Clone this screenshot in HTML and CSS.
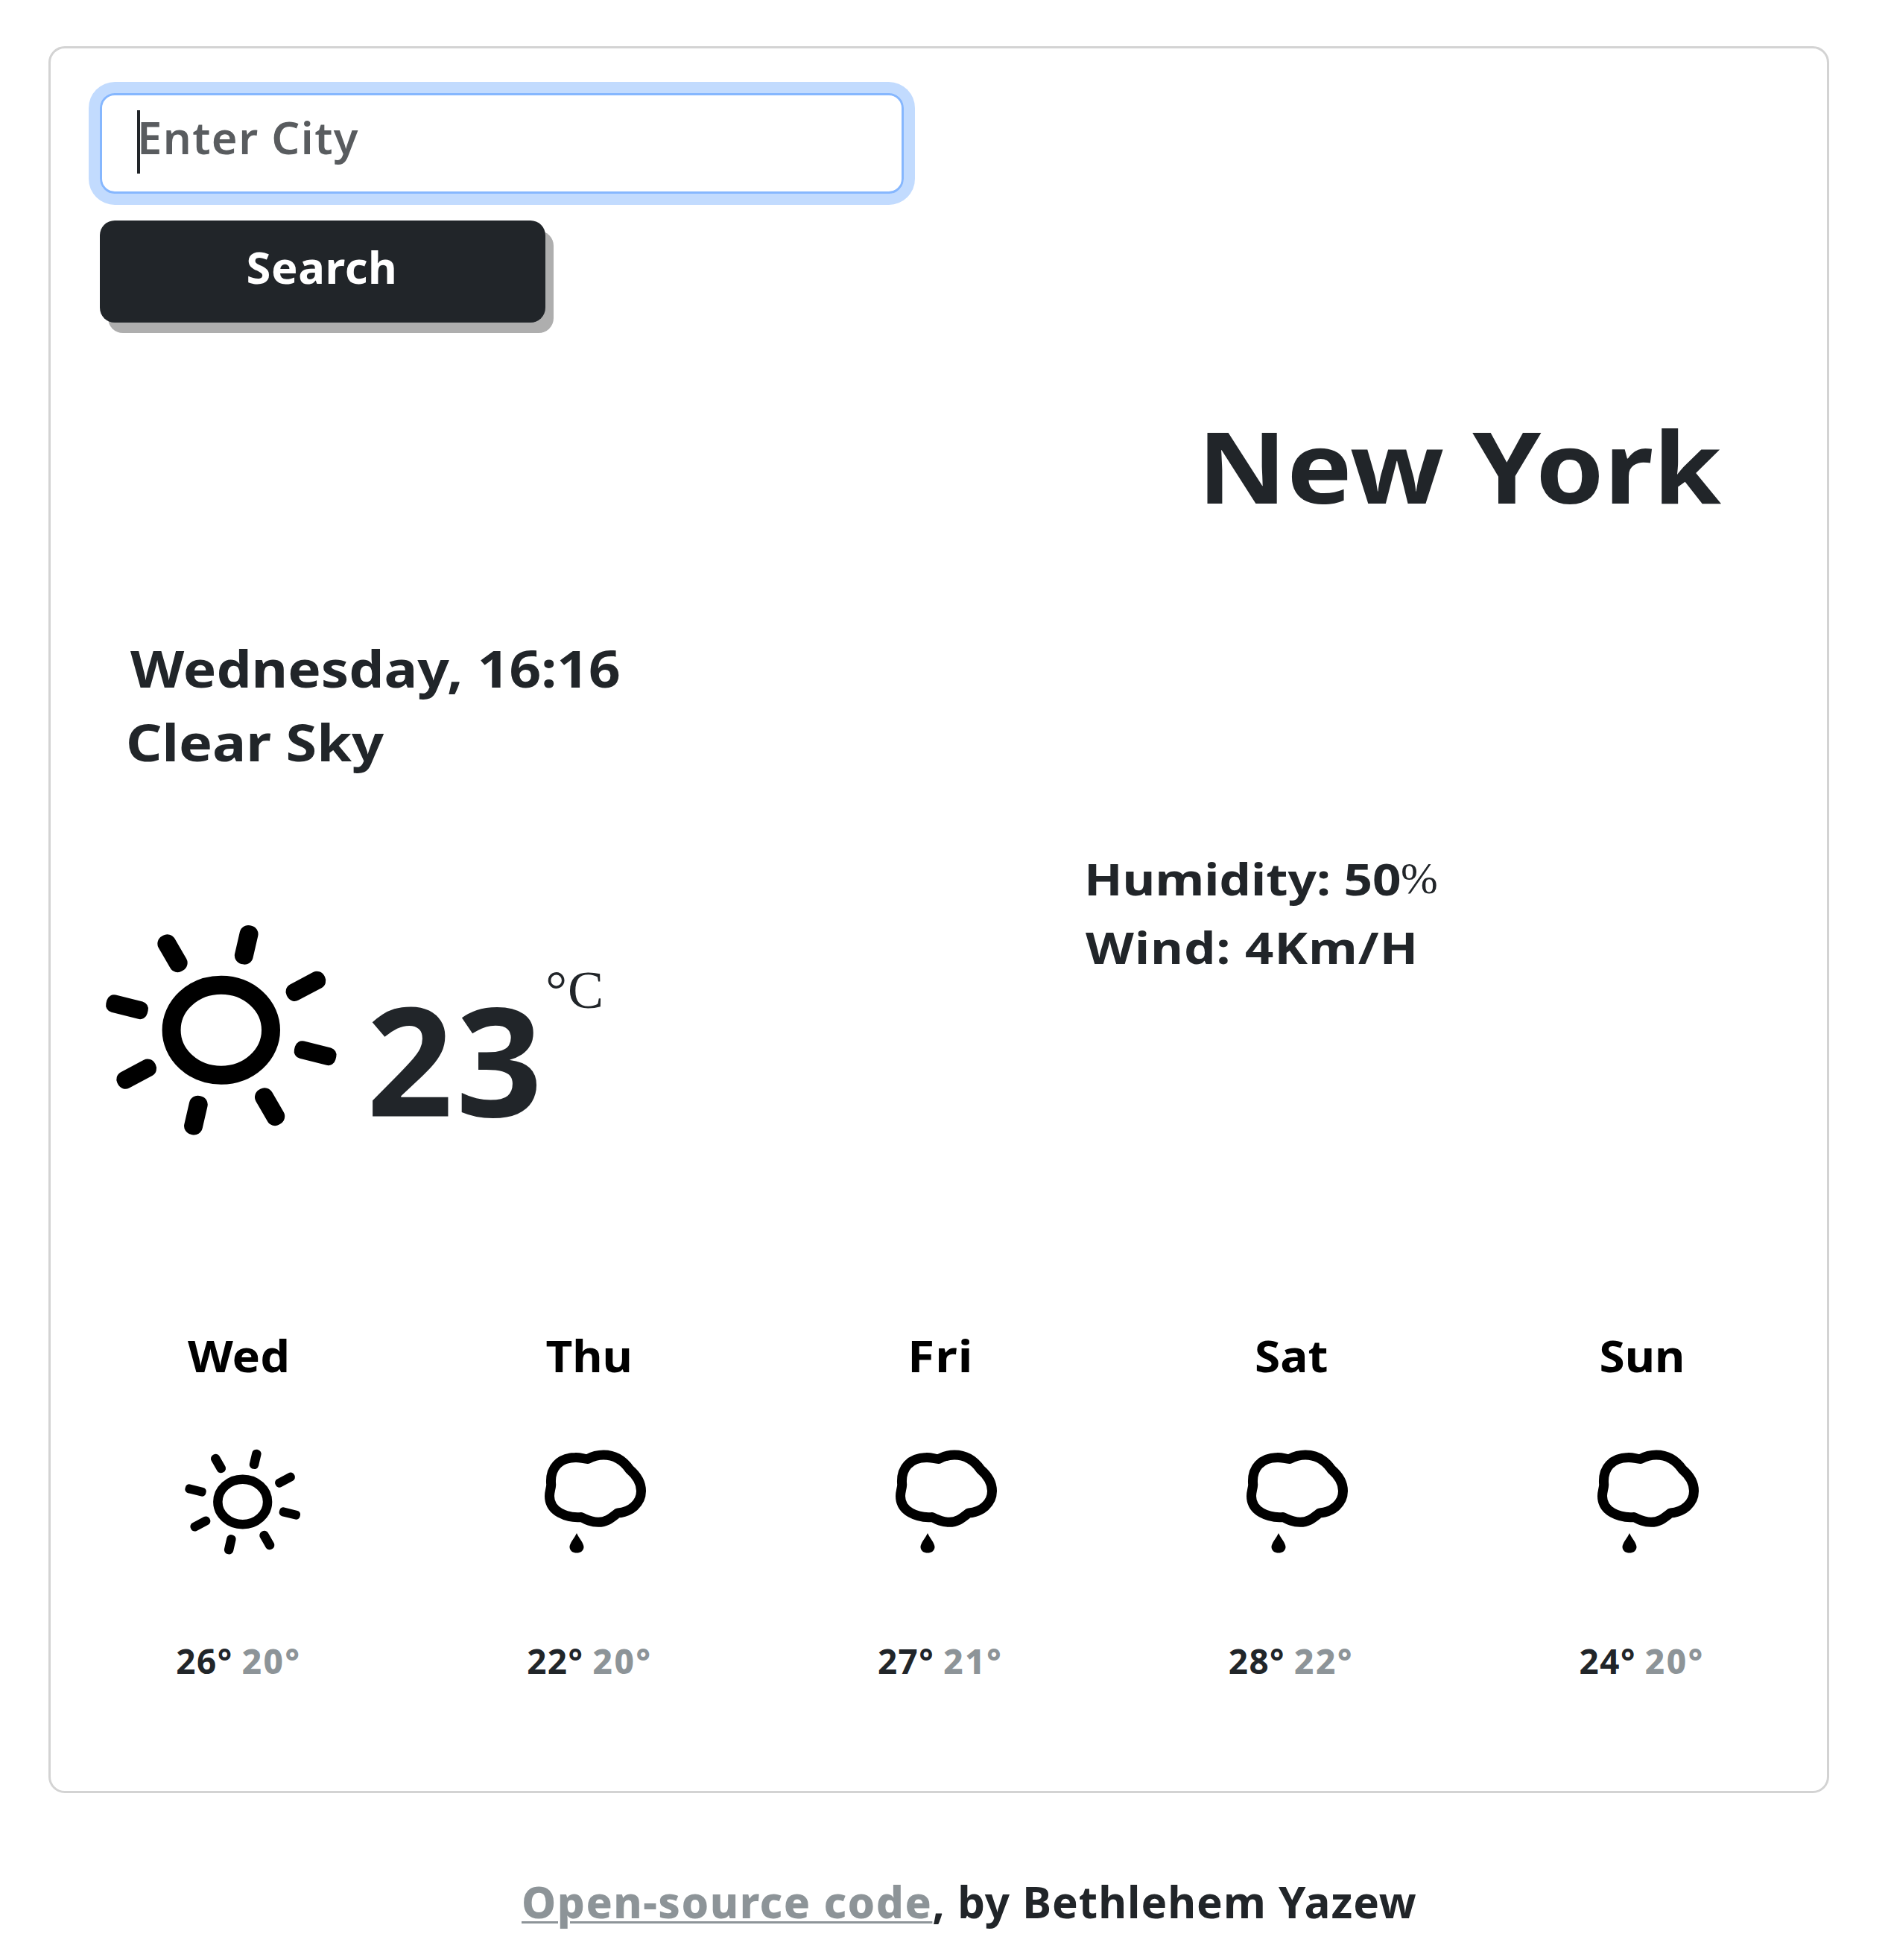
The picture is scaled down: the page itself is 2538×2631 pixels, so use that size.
FILE: index.html
```html
<!DOCTYPE html>
<html lang="en">
<head>
<meta charset="utf-8">
<title>Weather</title>
<link rel="stylesheet" href="styles.css">
</head>
<body>
<svg class="defs" aria-hidden="true">
  <defs>
    <symbol id="sun" viewBox="137 1232 320 300">
      <ellipse cx="296.8" cy="1382.7" rx="66.7" ry="60.5" fill="none" stroke="#000" stroke-width="25"/>
      <g id="rays">
        <rect x="-12.5" y="-26.5" width="25" height="53" rx="11.5" transform="translate(330.7 1268.3) rotate(13)"/>
        <rect x="-12.5" y="-27" width="25" height="54" rx="11.5" transform="translate(231.5 1279.7) rotate(-30)"/>
        <rect x="-12" y="-28.5" width="24" height="57" rx="11" transform="translate(410.4 1323.8) rotate(62)"/>
        <rect x="-12" y="-28.5" width="24" height="57" rx="10" transform="translate(170.5 1351.7) rotate(104)"/>
      </g>
      <use href="#rays" transform="rotate(180 296.8 1382.7)"/>
    </symbol>
    <symbol id="rain" viewBox="-90 -80 180 160">
      <path fill="none" stroke="#000" stroke-width="13" stroke-linejoin="round" d="M-51.3 -23C-53.5 -46 -40 -59 -19 -59.5C-12 -60 -8 -57.5 -2.2 -57.5C5 -61.5 12 -63 19 -63C35 -63 46 -55 54 -43.500C64 -35 69.5 -26 69.5 -14.5C69.5 2 55 14 38 15C30 21 24 27.3 12 27.3C2 27.3 -4 24 -11 20.5C-31 22 -53.5 13 -53.5 -7.7C-53.5 -14 -51.5 -18 -51.3 -23Z"/>
      <path d="M-17 42C-19 47 -27 56 -26.5 61C-26 66 -22 68.5 -17 68.5C-12 68.5 -8 66 -7.5 61C-7 56 -15 47 -17 42Z"/>
    </symbol>
  </defs>
</svg>
<main class="card">
  <form class="search">
    <div class="field">
      <span class="placeholder">Enter City</span>
      <span class="caret"></span>
    </div>
    <button class="submit" type="button">Search</button>
  </form>
  <h1 class="city">New York</h1>
  <div class="summary">
    <div class="time">Wednesday, 16:16</div>
    <div class="sky">Clear Sky</div>
  </div>
  <section class="current">
    <div class="now">
      <svg class="now-icon"><use href="#sun"/></svg>
      <span class="now-temp">23</span>
      <span class="unit">°C</span>
    </div>
    <div class="details">
      <div class="humidity"><span class="humidity-value">Humidity: 50</span><span class="percent">%</span></div>
      <div class="wind">Wind: 4Km/H</div>
    </div>
  </section>
  <section class="forecast">
    <div class="day">
      <div class="day-name wed">Wed</div>
      <svg class="day-icon" viewBox="-90 -80 180 160"><use href="#sun" x="-74.2" y="-75.3" width="160" height="150"/></svg>
      <div class="temps"><span>26°</span><span class="low">20°</span></div>
    </div>
    <div class="day">
      <div class="day-name">Thu</div>
      <svg class="day-icon"><use href="#rain"/></svg>
      <div class="temps"><span>22°</span><span class="low">20°</span></div>
    </div>
    <div class="day">
      <div class="day-name fri">Fri</div>
      <svg class="day-icon"><use href="#rain"/></svg>
      <div class="temps"><span>27°</span><span class="low">21°</span></div>
    </div>
    <div class="day">
      <div class="day-name">Sat</div>
      <svg class="day-icon"><use href="#rain"/></svg>
      <div class="temps"><span>28°</span><span class="low">22°</span></div>
    </div>
    <div class="day">
      <div class="day-name">Sun</div>
      <svg class="day-icon"><use href="#rain"/></svg>
      <div class="temps"><span>24°</span><span class="low">20°</span></div>
    </div>
  </section>
</main>
<footer class="footer"><a class="source" href="#">Open-source code</a>, by Bethlehem Yazew</footer>
</body>
</html>
```
FILE: styles.css
```css
* { box-sizing: border-box; }
body {
  margin: 0;
  padding: 62px 83px 0 65px;
  background: #fff;
  color: #212529;
  font-family: "Noto Sans", sans-serif;
  font-weight: 600;
}
.defs { display: block; width: 0; height: 0; }
.card {
  height: 2345px;
  border: 3px solid #d3d3d3;
  border-radius: 22px;
}
.search { padding: 60px 0 0 66px; }
.field {
  position: relative;
  display: flex;
  align-items: center;
  width: 1079px;
  height: 135px;
  padding: 0 47px 19px;
  border: 3px solid #86b7fe;
  border-radius: 20px;
  box-shadow: 0 0 0 15px #c2dbfe;
}
.placeholder {
  color: #595c5f;
  font-size: 59.7px;
  font-weight: 600;
  letter-spacing: 1.4px;
  white-space: nowrap;
}
.caret {
  position: absolute;
  left: 47px;
  top: 20px;
  width: 4px;
  height: 85px;
  background: #212529;
}
.submit {
  display: block;
  width: 598px;
  height: 137px;
  margin: 36px 0 0;
  padding: 0 2px 15px 0;
  border: 0;
  border-radius: 20px;
  background: #212529;
  box-shadow: 11px 14px 0 #aeaeae;
  color: #fff;
  font: 700 59.7px "Noto Sans", sans-serif;
  letter-spacing: 0.6px;
}
.city {
  margin: 112px 142px 0 0;
  font-size: 132.6px;
  font-weight: 700;
  line-height: 160px;
  text-align: right;
  transform: scaleX(1.11);
  transform-origin: right;
}
.summary {
  padding: 142px 0 0 101px;
  font-size: 68px;
  font-weight: 700;
  line-height: 99px;
}
.time, .sky, .humidity-value, .wind {
  width: max-content;
  transform: scaleX(1.099);
  transform-origin: left;
}
.time { margin-left: 6px; }
.sky { transform: scaleX(1.11); }
.current {
  display: grid;
  grid-template-columns: 1387px 1fr;
  height: 734px;
}
.now { display: flex; align-items: flex-start; }
.now-icon { width: 320px; height: 300px; margin: 187px 35px 0 69px; }
.now-temp {
  margin-top: 275px;
  font-size: 203px;
  font-weight: 700;
  line-height: 200px;
  letter-spacing: 4px;
}
.unit {
  margin-top: 244px;
  font: 400 72px/80px "Liberation Serif", serif;
  letter-spacing: 1px;
}
.details {
  padding-top: 88px;
  font-size: 59.7px;
  font-weight: 700;
  line-height: 92.3px;
}
.humidity { display: flex; height: 92.3px; }
.humidity-value { width: 382px; white-space: nowrap; transform: scaleX(1.13); }
.wind { margin-left: 2px; letter-spacing: 1px; transform: scaleX(1.124); }
.percent {
  margin-left: 43px;
  font-family: "Liberation Serif", serif;
  font-weight: 400;
}
.forecast {
  display: grid;
  grid-template-columns: repeat(5, 470.8px);
  padding-left: 17px;
}
.day { display: flex; flex-direction: column; align-items: center; }
.day-name {
  color: #000;
  font-size: 58.3px;
  font-weight: 700;
  line-height: 80px;
  padding-top: 1px;
  transform: scaleX(1.065);
}
.wed { transform: scaleX(1.08); }
.fri { letter-spacing: 1px; transform: scaleX(1.13); }
.day-icon { width: 180px; height: 160px; margin-top: 76px; }
.temps {
  display: flex;
  gap: 12px;
  margin-top: 101px;
  font-size: 45.8px;
  line-height: 64px;
  font-weight: 700;
  letter-spacing: 1.5px;
}
.low { color: #8d9498; font-weight: 800; letter-spacing: 2.5px; }
.footer {
  margin-top: 106px;
  padding-left: 635px;
  font-size: 58.3px;
  font-weight: 700;
  line-height: 80px;
  letter-spacing: 1px;
  white-space: nowrap;
}
.source {
  color: #8d9498;
  font-weight: 800;
  letter-spacing: 1.5px;
  text-decoration: underline;
  text-decoration-thickness: 3px;
  text-underline-offset: 4px;
}
```
